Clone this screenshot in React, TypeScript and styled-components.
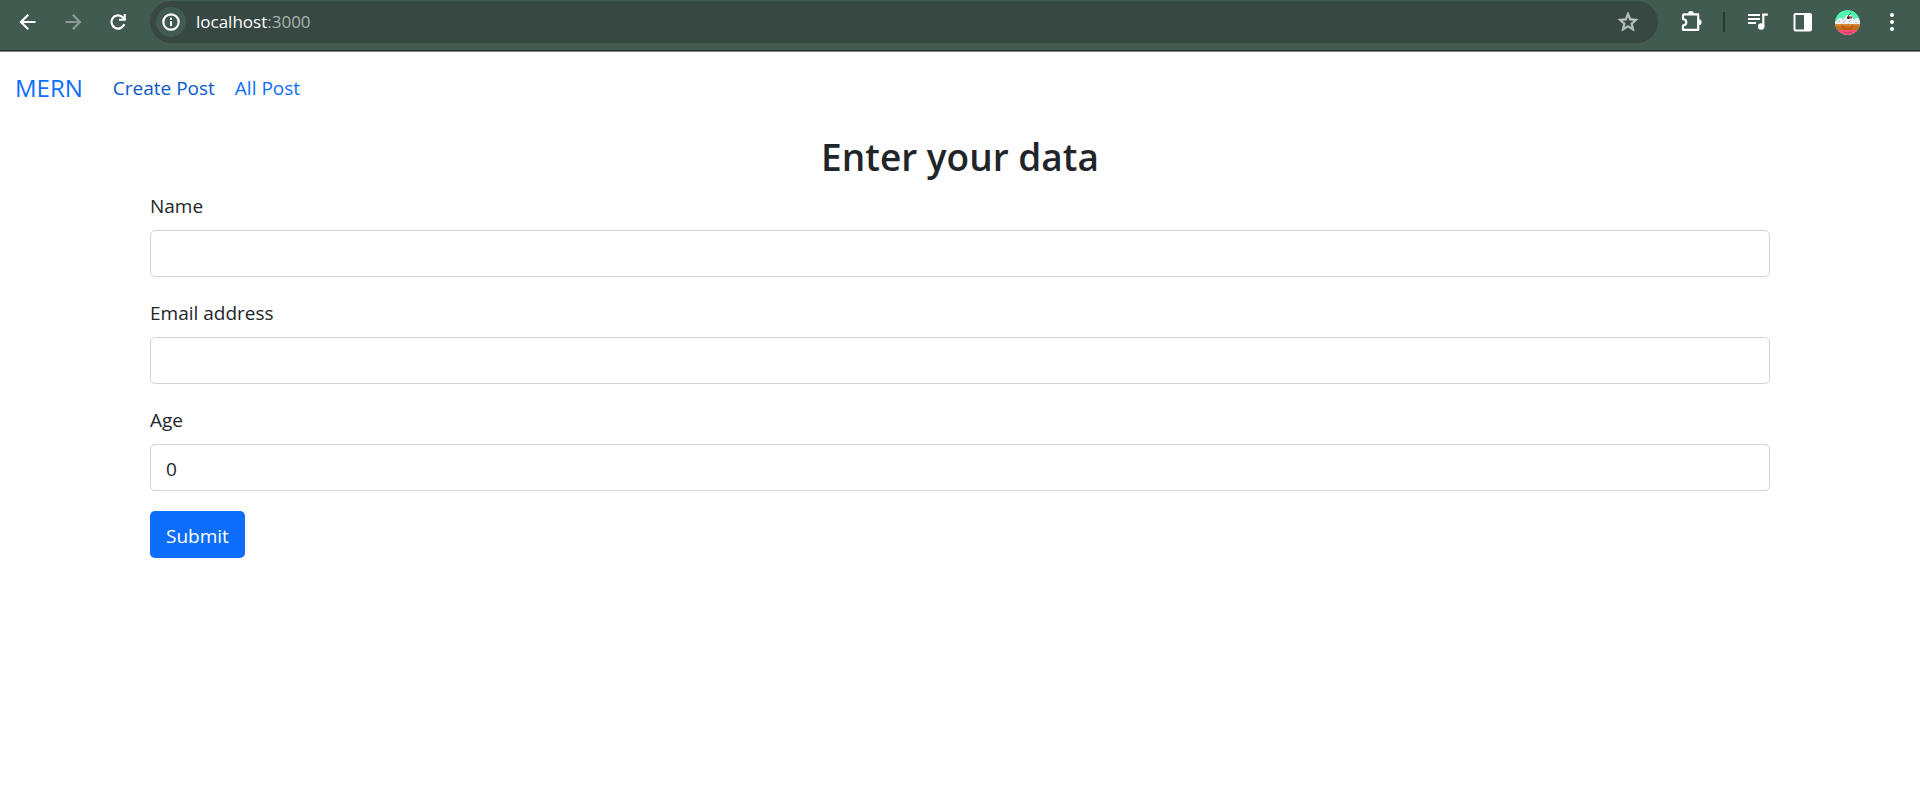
import React from "react";
import styled, { createGlobalStyle } from "styled-components";

const GlobalStyle = createGlobalStyle`
  *, *::before, *::after { box-sizing: border-box; }
  body {
    margin: 0;
    background: #fff;
    color: #212529;
    font-family: "Segoe UI", "Open Sans", "Noto Sans", sans-serif;
    font-size: 19px;
    line-height: 32px;
  }
`;

const Toolbar = styled.header`
  display: flex;
  align-items: center;
  height: 52px;
  padding: 1px 16px 8px 15px;
  background: #425b51;
  border-bottom: 1px solid #7b8581;
  box-shadow: inset 0 -1px 0 #26332e;
`;

const IconButton = styled.button<{ $gap?: number }>`
  display: flex;
  flex: none;
  align-items: center;
  justify-content: center;
  width: 25px;
  height: 26px;
  margin: 0 ${(p) => p.$gap ?? 0}px 0 0;
  padding: 0;
  border: 0;
  background: none;
  color: #fff;
  &:disabled { color: #8a9a94; }
`;

const AddressBar = styled.div`
  display: flex;
  flex: 1;
  align-items: center;
  height: 42px;
  margin-right: 21px;
  padding: 0 18px 0 6px;
  border-radius: 21px;
  background: #374842;
`;

const SiteInfo = styled.button`
  display: flex;
  flex: none;
  align-items: center;
  justify-content: center;
  width: 30px;
  height: 30px;
  padding: 0;
  border: 0;
  border-radius: 50%;
  background: #425b51;
  color: #fff;
`;

const Address = styled.div`
  flex: 1;
  padding-left: 10px;
  color: #fff;
  font-size: 17px;
`;

const Port = styled.span`
  color: #a9b3af;
`;

const Divider = styled.span`
  width: 2px;
  height: 20px;
  margin: 0 20px 0 19px;
  background: #293a33;
`;

const Navbar = styled.nav`
  display: flex;
  align-items: center;
  height: 72px;
  padding: 0 15px;
  gap: 20px;
`;

const Brand = styled.a`
  margin-right: 10px;
  color: #0d6efd;
  font-size: 24px;
  text-decoration: none;
`;

const NavLink = styled.a<{ $active?: boolean }>`
  color: ${(p) => (p.$active ? "#0a58ca" : "#0d6efd")};
  text-decoration: none;
`;

const Main = styled.main`
  padding: 8px 150px;
`;

const Title = styled.h2`
  margin: 0 0 8px;
  font-size: 37px;
  font-weight: 600;
  line-height: 50px;
  text-align: center;
`;

const Field = styled.div`
  margin-bottom: 20px;
`;

const Label = styled.label`
  display: block;
  width: fit-content;
  margin-bottom: 8px;
`;

const Input = styled.input`
  display: block;
  width: 100%;
  height: 47px;
  padding: 8px 15px 6px;
  border: 1px solid #ced4da;
  border-radius: 5px;
  background: #fff;
  color: #212529;
  font: inherit;
  appearance: textfield;
`;

const Submit = styled.button`
  display: block;
  height: 47px;
  padding: 2px 16px 0;
  border: 0;
  border-radius: 5px;
  background: #0d6efd;
  color: #fff;
  font: inherit;
`;

const Icon = ({ size = 24, children }: { size?: number; children: React.ReactNode }) => (
  <svg width={size} height={size} viewBox="0 0 24 24" fill="none" stroke="currentColor" strokeWidth="2.2" aria-hidden="true">
    {children}
  </svg>
);

const Avatar = () => (
  <svg width="25" height="25" viewBox="0 0 25 25" aria-hidden="true">
    <defs>
      <clipPath id="avatar-clip">
        <circle cx="12.5" cy="12.5" r="12.5" />
      </clipPath>
    </defs>
    <g clipPath="url(#avatar-clip)">
      <rect width="25" height="25" fill="#50f5b2" />
      <path d="M0 15V12l2-2 2-2h3l1 2 2-3 2-2h4l2 3 1 2 2-2h2l2 3v4z" fill="#eeeef3" />
      <path d="M3 12l2-1M8 13l2-3M14 12l2-2M20 12l2 1M11 8l2 1" stroke="#b8bbc4" />
      <rect y="14" width="25" height="6" fill="#c96b18" />
      <path d="M0 15h25" stroke="#e3a04e" />
      <path d="M7 15l2 4h7l2-4" fill="none" stroke="#a95310" />
      <rect y="20" width="25" height="5" fill="#ff4d78" />
      <path d="M8 22l4 1 5-1" stroke="#cc3f68" fill="none" />
      <path d="M13 7q0-2 3-4" stroke="#267a55" fill="none" />
      <circle cx="13.5" cy="7.500" r="1.500" fill="#42212b" />
      <circle cx="16" cy="7.500" r="1.300" fill="#c83950" />
    </g>
  </svg>
);

export default function App() {
  return (
    <>
      <GlobalStyle />
      <Toolbar>
        <IconButton aria-label="Back" $gap={20}>
          <Icon><path d="M19.5 12H5.5M12.2 4.8L5 12l7.2 7.2" /></Icon>
        </IconButton>
        <IconButton aria-label="Forward" disabled $gap={20}>
          <Icon><path d="M4.500 12H18.500M11.800 4.800L19 12l-7.200 7.200" /></Icon>
        </IconButton>
        <IconButton aria-label="Reload" $gap={20}>
          <Icon>
            <path d="M18.300 14.200A6.600 6.600 0 1 1 17 7.500L18.500 9" />
            <path d="M19.800 4v6.800H13V8.700h4.700V4z" fill="currentColor" stroke="none" />
          </Icon>
        </IconButton>
        <AddressBar>
          <SiteInfo aria-label="View site information">
            <Icon>
              <circle cx="12" cy="12" r="7.700" strokeWidth="2.200" />
              <path d="M12 11v5M12 7.700v2" strokeWidth="2" />
            </Icon>
          </SiteInfo>
          <Address>localhost<Port>:3000</Port></Address>
          <IconButton aria-label="Bookmark this tab">
            <Icon>
              <path
                d="M22 9.240l-7.190-.62L12 2 9.190 8.630 2 9.240l5.460 4.730L5.820 21 12 17.270 18.180 21l-1.630-7.030L22 9.240zM12 15.400l-3.760 2.270 1-4.280-3.320-2.880 4.380-.38L12 6.100l1.710 4.040 4.380.38-3.320 2.880 1 4.280L12 15.400z"
                fill="#bcc4c1"
                stroke="#bcc4c1"
                strokeWidth=".6"
              />
            </Icon>
          </IconButton>
        </AddressBar>
        <IconButton aria-label="Extensions">
          <Icon>
            <path d="M4 4.300H18.200V19.800H3V15.500Q6.300 15 6.300 12.200T3 9V5.300Q3 4.300 4 4.300Z" strokeLinejoin="round" />
            <path d="M8 4.300a2.900 3.200 0 0 1 5.800 0zM18.200 9.200a3.500 3 0 0 1 0 6z" fill="currentColor" stroke="none" />
          </Icon>
        </IconButton>
        <Divider />
        <IconButton aria-label="Control your media" $gap={20}>
          <Icon>
            <path d="M2 5h12M2 9h12M2 13h8M17.300 16.500V4.700h4.500" />
            <circle cx="15.200" cy="16.500" r="3.200" fill="currentColor" stroke="none" />
          </Icon>
        </IconButton>
        <IconButton aria-label="Side panel" $gap={20}>
          <Icon>
            <rect x="3.500" y="4" width="16.500" height="16.500" rx="1" strokeWidth="2" />
            <path d="M13 4h7v16.500h-7z" fill="currentColor" stroke="none" />
          </Icon>
        </IconButton>
        <IconButton aria-label="Profile" $gap={19}>
          <Avatar />
        </IconButton>
        <IconButton aria-label="Menu">
          <Icon>
            <g fill="currentColor" stroke="none">
              <circle cx="12" cy="5" r="2" />
              <circle cx="12" cy="12" r="2" />
              <circle cx="12" cy="19" r="2" />
            </g>
          </Icon>
        </IconButton>
      </Toolbar>
      <Navbar>
        <Brand href="#">MERN</Brand>
        <NavLink href="#create" $active>Create Post</NavLink>
        <NavLink href="#all">All Post</NavLink>
      </Navbar>
      <Main>
        <Title>Enter your data</Title>
        <form onSubmit={(e) => e.preventDefault()}>
          <Field>
            <Label htmlFor="name">Name</Label>
            <Input id="name" type="text" />
          </Field>
          <Field>
            <Label htmlFor="email">Email address</Label>
            <Input id="email" type="email" />
          </Field>
          <Field>
            <Label htmlFor="age">Age</Label>
            <Input id="age" type="number" defaultValue={0} />
          </Field>
          <Submit type="submit">Submit</Submit>
        </form>
      </Main>
    </>
  );
}
